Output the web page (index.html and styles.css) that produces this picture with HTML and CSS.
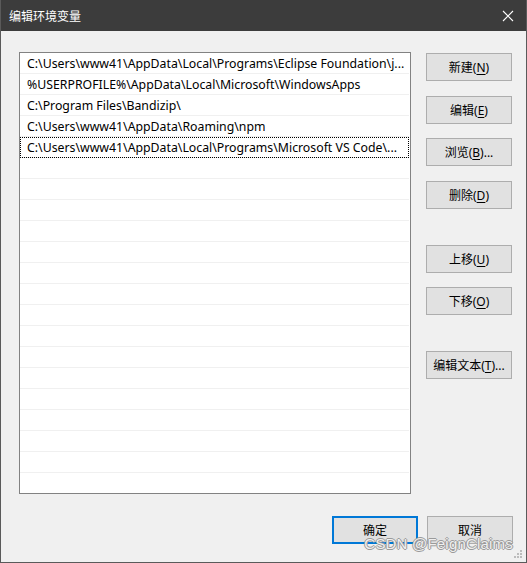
FILE: index.html
```html
<!DOCTYPE html>
<html lang="zh-CN">
<head>
    <meta charset="UTF-8">
    <meta name="viewport" content="width=device-width, initial-scale=1.0">
    <title>编辑环境变量</title>
    <link rel="stylesheet" href="styles.css">
</head>
<body>
    <div id="window">
        <div id="titlebar">
            <span class="title">编辑环境变量</span>
            <svg class="close" width="12" height="12" viewBox="0 0 12 12">
                <path d="M1 1 L11 11 M11 1 L1 11" stroke="#fff" stroke-width="1.1" fill="none"/>
            </svg>
        </div>
        <div id="content">
            <div id="main">
                <div id="pathlist">
                    <div class="row">C:\Users\www41\AppData\Local\Programs\Eclipse Foundation\j...</div>
                    <div class="row">%USERPROFILE%\AppData\Local\Microsoft\WindowsApps</div>
                    <div class="row">C:\Program Files\Bandizip\</div>
                    <div class="row">C:\Users\www41\AppData\Roaming\npm</div>
                    <div class="row focused">C:\Users\www41\AppData\Local\Programs\Microsoft VS Code\...</div>
                    <div class="row"></div>
                    <div class="row"></div>
                    <div class="row"></div>
                    <div class="row"></div>
                    <div class="row"></div>
                    <div class="row"></div>
                    <div class="row"></div>
                    <div class="row"></div>
                    <div class="row"></div>
                    <div class="row"></div>
                    <div class="row"></div>
                    <div class="row"></div>
                    <div class="row"></div>
                    <div class="row"></div>
                    <div class="row"></div>
                    <div class="row"></div>
                </div>
                <div id="sidebuttons">
                    <button class="btn">新建(<u>N</u>)</button>
                    <button class="btn">编辑(<u>E</u>)</button>
                    <button class="btn">浏览(<u>B</u>)...</button>
                    <button class="btn">删除(<u>D</u>)</button>
                    <button class="btn groupstart">上移(<u>U</u>)</button>
                    <button class="btn">下移(<u>O</u>)</button>
                    <button class="btn groupstart">编辑文本(<u>T</u>)...</button>
                </div>
            </div>
            <div id="footer">
                <button class="btn default">确定</button>
                <button class="btn">取消</button>
            </div>
        </div>
        <svg class="grip" width="9" height="9" viewBox="0 0 9 9">
            <rect x="6" y="0" width="2" height="2" fill="#bcbcbc"/>
            <rect x="3" y="3" width="2" height="2" fill="#bcbcbc"/>
            <rect x="6" y="3" width="2" height="2" fill="#bcbcbc"/>
            <rect x="0" y="6" width="2" height="2" fill="#bcbcbc"/>
            <rect x="3" y="6" width="2" height="2" fill="#bcbcbc"/>
            <rect x="6" y="6" width="2" height="2" fill="#bcbcbc"/>
        </svg>
        <div class="watermark">CSDN @FeignClaims</div>
    </div>
</body>
</html>
```
FILE: styles.css
```css
body {
    margin: 0;
    font-family: "Noto Sans", "Noto Sans CJK SC", sans-serif;
    font-size: 12px;
    color: #000;
}
#window {
    position: relative;
    width: 527px;
    height: 563px;
    box-sizing: border-box;
    background-color: #f0f0f0;
    border: 1px solid #5a5a5a;
    border-top: none;
    display: flex;
    flex-direction: column;
    overflow: hidden;
}
#titlebar {
    height: 31px;
    margin: 0 -1px;
    background-color: #3c3c3c;
    color: #fff;
    display: flex;
    align-items: center;
    justify-content: space-between;
    padding: 0 13px 0 9px;
    flex-shrink: 0;
}
.title {
    font-family: "Noto Sans CJK SC", sans-serif;
    font-size: 12px;
    padding-bottom: 1px;
}
.close {
    display: block;
}
#content {
    flex: 1;
    padding: 21px 0 0 18px;
    display: flex;
    flex-direction: column;
}
#main {
    display: flex;
    gap: 15px;
}
#pathlist {
    width: 392px;
    height: 442px;
    box-sizing: border-box;
    background-color: #fff;
    border: 1px solid #828282;
    overflow: hidden;
}
.row {
    height: 21px;
    box-sizing: border-box;
    border-bottom: 1px solid #f0f0f0;
    margin-right: 1px;
    padding: 2px 0 0 7px;
    line-height: 17px;
    font-size: 12.3px;
    white-space: nowrap;
    overflow: hidden;
}
.row.focused {
    outline: 1px dotted #000;
    outline-offset: -1px;
}
#sidebuttons {
    display: flex;
    flex-direction: column;
    gap: 14.5px;
    padding-top: 1px;
}
.btn {
    width: 86px;
    height: 28px;
    box-sizing: border-box;
    background-color: #e1e1e1;
    border: 1px solid #adadad;
    font-family: "Noto Sans", "Noto Sans CJK SC", sans-serif;
    font-size: 12px;
    color: #000;
    padding: 0;
    margin: 0;
}
.btn u {
    text-decoration-thickness: 1px;
    text-underline-offset: 2px;
}
.groupstart {
    margin-top: 21.5px;
}
#footer {
    display: flex;
    justify-content: flex-end;
    gap: 9px;
    margin-top: 22px;
    padding-right: 13px;
}
.btn.default {
    border: 2px solid #0078d7;
}
.grip {
    position: absolute;
    right: 3px;
    bottom: 3px;
}
.watermark {
    position: absolute;
    right: 13px;
    bottom: 10px;
    font-family: "Liberation Sans", sans-serif;
    font-size: 15px;
    letter-spacing: 0.2px;
    color: rgba(255, 255, 255, 0.85);
    text-shadow: 1px 0 0 #9a9a9a, -1px 0 0 #9a9a9a, 0 1px 0 #9a9a9a, 0 -1px 0 #9a9a9a;
}
```
